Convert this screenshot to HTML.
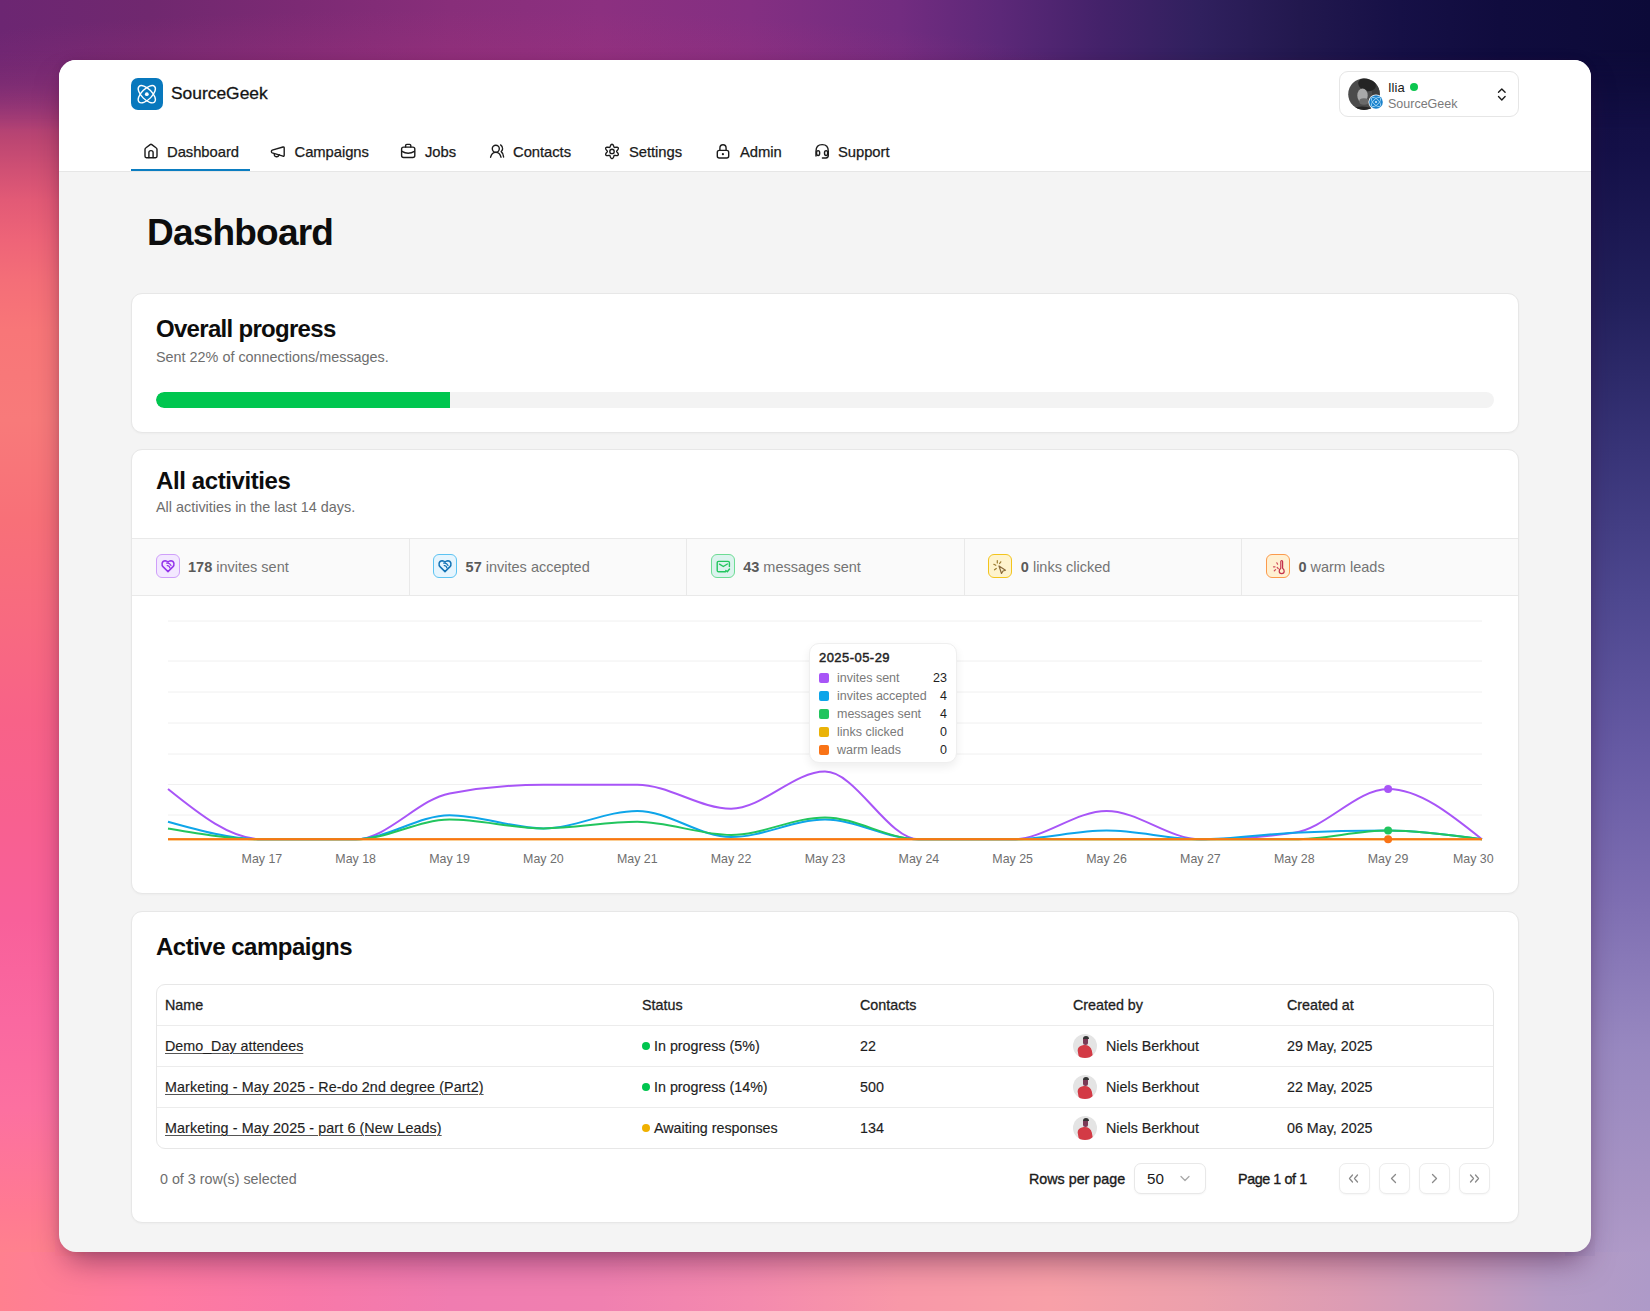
<!DOCTYPE html>
<html><head><meta charset="utf-8">
<style>
*{box-sizing:border-box;margin:0;padding:0}
html,body{width:1650px;height:1311px;overflow:hidden;font-family:"Liberation Sans",sans-serif;color:#111;background:#7a3a80}
.abs{position:absolute}
.t{position:absolute;white-space:nowrap;line-height:1}
#bg-top{left:0;top:0;width:1650px;height:140px;background:radial-gradient(ellipse 650px 70px at 450px 80px,rgba(165,50,125,.45),rgba(165,50,125,0)),linear-gradient(90deg,#6c2672 0,#70286f 150px,#7c2a74 300px,#882e7a 450px,#8c3080 600px,#842f82 750px,#722c80 900px,#5c2878 1000px,#44226a 1100px,#30205e 1200px,#22184e 1300px,#161046 1400px,#100c3e 1500px,#0c0a38 1650px)}
#bg-left{left:0;top:0;width:59px;height:1311px;background:linear-gradient(180deg,#6a2670 0,#722870 45px,#883274 80px,#a43c76 110px,#bc4672 140px,#d05074 170px,#e25a76 200px,#ee6478 240px,#f46e78 280px,#f87678 330px,#f87a7a 420px,#f87078 520px,#f86a80 620px,#f86288 720px,#f86090 820px,#f8609a 920px,#fa68a0 1020px,#fc70a0 1110px,#ff7a92 1210px,#ff8a88 1311px);-webkit-mask-image:linear-gradient(180deg,transparent 0,transparent 50px,#000 130px)}
#bg-right{left:1591px;top:0;width:59px;height:1311px;background:linear-gradient(180deg,#0e0b3a 0,#141048 150px,#22205c 300px,#383478 450px,#4e4890 600px,#665aa4 750px,#7e6eb2 900px,#9888c0 1050px,#a894c4 1200px,#b6a0cc 1311px);-webkit-mask-image:linear-gradient(180deg,transparent 0,transparent 50px,#000 130px)}
#bg-bot{left:0;top:1252px;width:1650px;height:59px;background:linear-gradient(90deg,#ff808f 0,#ff7aa0 150px,#f878a8 300px,#f07cb0 450px,#f080b0 600px,#f48aae 750px,#f898a8 900px,#f8a0a8 1050px,#eca0ac 1200px,#dc9cb4 1350px,#cc9cbc 1450px,#b69cc6 1550px,#ae9ac8 1650px)}
#win{left:59px;top:60px;width:1532px;height:1192px;border-radius:17px;background:#f4f4f4;overflow:hidden;box-shadow:0 16px 30px -8px rgba(60,10,50,.5),0 0 8px rgba(60,10,50,.12)}
#hdr{left:0;top:0;width:1532px;height:112px;background:#fff;border-bottom:1px solid #e6e6e6}
.card{position:absolute;left:131px;width:1388px;background:#fff;border:1px solid #e7e7e7;border-radius:11px;box-shadow:0 1px 2px rgba(0,0,0,.03)}
.nav{font-size:14.8px;letter-spacing:-0.05px;color:#1a1a1a;-webkit-text-stroke:0.25px #1a1a1a}
svg{position:absolute;overflow:visible}
.ttl{font-size:24px;font-weight:700;letter-spacing:-0.5px;color:#0d0d0d}
.sub{font-size:14.4px;color:#6e6e6e}
.stat{font-size:14.5px;color:#747474}
.stat b{color:#5a5a5a}
.ib{position:absolute;width:24px;height:24px;border-radius:6px;border:1.3px solid}
.xl{font-size:12.4px;color:#6f6f6f;top:852.5px}
.tt{font-size:12.5px;color:#7a7a7a}
.tv{font-size:12.5px;color:#1e1e1e;text-align:right;width:30px}
.sq{position:absolute;width:10px;height:10px;border-radius:2px}
.th{font-size:14.3px;color:#1e1e1e;-webkit-text-stroke:0.3px #1e1e1e}
.td{font-size:14.3px;color:#1e1e1e;-webkit-text-stroke:0.15px #1e1e1e}
.lnk{text-decoration:underline;text-decoration-color:#555;text-decoration-thickness:1.2px;text-underline-offset:1.5px}
.pb{position:absolute;top:1163px;width:31px;height:31px;border:1px solid #ececec;border-radius:7px;background:#fff;box-shadow:0 1px 2px rgba(0,0,0,.04)}
</style></head><body>
<div id="bg-top" class="abs"></div>
<div id="bg-left" class="abs"></div>
<div id="bg-right" class="abs"></div>
<div id="bg-bot" class="abs"></div>
<div class="abs" style="left:55px;top:1226px;width:30px;height:30px;background:#ff7c92"></div>
<div class="abs" style="left:1565px;top:1226px;width:30px;height:30px;background:#ac96c4"></div>
<div id="win" class="abs">
  <div id="hdr" class="abs"></div>
</div>
<!-- logo -->
<div class="abs" style="left:131px;top:78px;width:32px;height:32px;border-radius:7px;background:#0878bd"></div>
<div class="t" style="left:171px;top:85px;font-size:17.4px;color:#141414;-webkit-text-stroke:0.3px #141414">SourceGeek</div>
<!-- nav -->
<div class="abs" style="left:131px;top:169px;width:119px;height:2px;background:#0b7dc1"></div>
<div class="t nav" style="left:167px;top:144.9px">Dashboard</div>
<div class="t nav" style="left:294.5px;top:144.9px">Campaigns</div>
<div class="t nav" style="left:425px;top:144.9px">Jobs</div>
<div class="t nav" style="left:513px;top:144.9px">Contacts</div>
<div class="t nav" style="left:629px;top:144.9px">Settings</div>
<div class="t nav" style="left:740px;top:144.9px">Admin</div>
<div class="t nav" style="left:838px;top:144.9px">Support</div>
<!-- user box -->
<div class="abs" style="left:1339px;top:71px;width:180px;height:46px;border:1px solid #e6e6e6;border-radius:9px;background:#fff"></div>
<svg style="left:0;top:0" width="1650" height="200">
 <defs><clipPath id="avc"><circle cx="1364" cy="94.2" r="15.8"/></clipPath></defs>
 <g clip-path="url(#avc)">
  <rect x="1346" y="76" width="36" height="36" fill="#4c4c4c"/>
  <rect x="1372" y="76" width="12" height="36" fill="#3c3c3c"/>
  <ellipse cx="1367" cy="84.5" rx="9" ry="6.5" fill="#242424" transform="rotate(18 1367 84.5)"/>
  <ellipse cx="1362.5" cy="95.5" rx="5.2" ry="7" fill="#a9a9a9"/>
  <ellipse cx="1364" cy="101.5" rx="4.8" ry="3.2" fill="#6a6a6a"/>
  <ellipse cx="1362" cy="112" rx="13" ry="5.5" fill="#262626"/>
 </g>
 <circle cx="1376" cy="102" r="7.6" fill="#fff"/>
 <circle cx="1376" cy="102" r="6.8" fill="#1a82cc"/>
 <g fill="none" stroke="#9fd4f5" stroke-width="0.9">
  <ellipse cx="1376" cy="102" rx="6" ry="2.8" transform="rotate(45 1376 102)"/>
  <ellipse cx="1376" cy="102" rx="6" ry="2.8" transform="rotate(-45 1376 102)"/>
 </g>
 <circle cx="1376" cy="102" r="1" fill="#dff2ff"/>
</svg>
<div class="t" style="left:1388px;top:80.5px;font-size:13px;color:#1a1a1a">Ilia</div>
<div class="abs" style="left:1410px;top:82.5px;width:8px;height:8px;border-radius:50%;background:#0cc64f"></div>
<div class="t" style="left:1388px;top:98px;font-size:12.5px;color:#7a7a7a">SourceGeek</div>

<!-- title -->
<div class="t" style="left:147px;top:214px;font-size:37px;font-weight:700;letter-spacing:-0.8px;color:#0d0d0d">Dashboard</div>

<!-- card 1 -->
<div class="card" style="top:293px;height:140px"></div>
<div class="t ttl" style="left:156px;top:317px;letter-spacing:-0.7px">Overall progress</div>
<div class="t sub" style="left:156px;top:350px">Sent 22% of connections/messages.</div>
<div class="abs" style="left:156px;top:391.5px;width:1338px;height:16px;border-radius:8px;background:#f3f3f3;overflow:hidden"><div style="width:294px;height:16px;background:#00c64f;border-radius:8px 0 0 8px"></div></div>

<!-- card 2 -->
<div class="card" style="top:449px;height:445px;overflow:hidden">
  <div class="abs" style="left:0;top:88px;width:1388px;height:58px;background:#fafafa;border-top:1px solid #e9e9e9;border-bottom:1px solid #e9e9e9"></div>
  <div class="abs" style="left:276.6px;top:88px;width:1px;height:58px;background:#e9e9e9"></div>
  <div class="abs" style="left:554.2px;top:88px;width:1px;height:58px;background:#e9e9e9"></div>
  <div class="abs" style="left:831.8px;top:88px;width:1px;height:58px;background:#e9e9e9"></div>
  <div class="abs" style="left:1109.4px;top:88px;width:1px;height:58px;background:#e9e9e9"></div>
</div>
<div class="t ttl" style="left:156px;top:469px;letter-spacing:-0.4px">All activities</div>
<div class="t sub" style="left:156px;top:500px">All activities in the last 14 days.</div>

<!-- stat icons -->
<div class="ib" style="left:156px;top:554px;border-color:#cf9ffa;background:#f3e8ff"></div>
<div class="ib" style="left:433px;top:554px;border-color:#5cc3f2;background:#e6f5fe"></div>
<div class="ib" style="left:711px;top:554px;border-color:#6ddc94;background:#dcf3ee"></div>
<div class="ib" style="left:988px;top:554px;border-color:#f3c41c;background:#fef3cd"></div>
<div class="ib" style="left:1266px;top:554px;border-color:#fb9a4c;background:#fff0d2"></div>
<svg style="left:0;top:0" width="1650" height="1311">
 <g fill="none" stroke-width="1.4" stroke-linecap="round" stroke-linejoin="round">
  <path d="M168.0,571.6L163.2,566.9Q161.7,565.3 162.1,563.3Q162.7,560.9 165.2,560.8Q166.8,560.8 168.0,562.1Q169.2,560.8 170.8,560.8Q173.3,560.9 173.9,563.3Q174.3,565.3 172.8,566.9Z" stroke="#9333ea" stroke-width="1.5"/>
  <path d="M166.6,563.2Q169.6,562.4 171.0,565.6M167.2,565.6Q169.2,565.2 170.0,568" stroke="#9333ea" stroke-width="1.2"/>
  <path d="M445.0,571.6L440.2,566.9Q438.7,565.3 439.1,563.3Q439.7,560.9 442.2,560.8Q443.8,560.8 445.0,562.1Q446.2,560.8 447.8,560.8Q450.3,560.9 450.9,563.3Q451.3,565.3 449.8,566.9Z" stroke="#1272b4" stroke-width="1.5"/>
  <path d="M443.6,563.2Q446.6,562.4 448.0,565.6M444.2,565.6Q446.2,565.2 447.0,568" stroke="#1272b4" stroke-width="1.2"/>
  <path d="M725.5,571.8H718.6Q717.2,571.8 717.2,570.4V562.6Q717.2,561.4 718.5,561.4H728.1Q729.4,561.4 729.4,562.7V566.5" stroke="#22c55e"/>
  <path d="M719.5,564.2L723.3,566.5L727.4,564" stroke="#22c55e"/>
  <path d="M725.8,570.5L727.3,571.8L729.5,569" stroke="#22c55e"/>
  <path d="M999,566L1001.5,573.5L1003,571L1005.5,570.2Z" stroke="#8a6a3a" stroke-width="1.2"/>
  <path d="M997.3,560.5V563M993.8,564.3L995.8,565.3M994.5,569.8L996.3,568.5M1000.8,561.8L999.6,563.5" stroke="#9a7a30" stroke-width="1.2"/>
  <path d="M1282.6,561.5V568.2Q1284.2,569.4 1284.2,571.2Q1284.2,573.6 1281.7,573.6Q1279.2,573.6 1279.2,571.2Q1279.2,569.4 1280.8,568.2V561.5Q1280.8,560.5 1281.7,560.5Q1282.6,560.5 1282.6,561.5Z" stroke="#c4314b" stroke-width="1.2"/>
  <path d="M1276.8,562.8L1277.6,564.2M1273.5,566.8H1275M1274.3,570.8L1275.6,569.6M1278.3,568.7L1277.2,567.5" stroke="#d04a5a" stroke-width="1.2"/>
 </g>
</svg>
<div class="t stat" style="left:188px;top:560.2px"><b>178</b> invites sent</div>
<div class="t stat" style="left:465.6px;top:560.2px"><b>57</b> invites accepted</div>
<div class="t stat" style="left:743.2px;top:560.2px"><b>43</b> messages sent</div>
<div class="t stat" style="left:1020.8px;top:560.2px"><b>0</b> links clicked</div>
<div class="t stat" style="left:1298.4px;top:560.2px"><b>0</b> warm leads</div>


<!-- card 3 -->
<div class="card" style="top:911px;height:312px"></div>
<div class="t ttl" style="left:156px;top:935px">Active campaigns</div>

<div class="abs" style="left:156px;top:984px;width:1338px;height:165px;border:1px solid #e7e7e7;border-radius:9px"></div>
<div class="abs" style="left:157px;top:1024.5px;width:1336px;height:1px;background:#ececec"></div>
<div class="abs" style="left:157px;top:1065.5px;width:1336px;height:1px;background:#ececec"></div>
<div class="abs" style="left:157px;top:1106.5px;width:1336px;height:1px;background:#ececec"></div>
<div class="t th" style="left:165px;top:998px">Name</div>
<div class="t th" style="left:642px;top:998px">Status</div>
<div class="t th" style="left:860px;top:998px">Contacts</div>
<div class="t th" style="left:1073px;top:998px">Created by</div>
<div class="t th" style="left:1287px;top:998px">Created at</div>

<div class="t td lnk" style="left:165px;top:1039px">Demo_Day attendees</div>
<div class="t td lnk" style="left:165px;top:1080px;letter-spacing:0.1px">Marketing - May 2025 - Re-do 2nd degree (Part2)</div>
<div class="t td lnk" style="left:165px;top:1121px;letter-spacing:0.1px">Marketing - May 2025 - part 6 (New Leads)</div>

<div class="abs" style="left:642px;top:1041.5px;width:8px;height:8px;border-radius:50%;background:#00c54f"></div>
<div class="abs" style="left:642px;top:1082.5px;width:8px;height:8px;border-radius:50%;background:#00c54f"></div>
<div class="abs" style="left:642px;top:1123.5px;width:8px;height:8px;border-radius:50%;background:#f0b100"></div>
<div class="t td" style="left:654px;top:1039px">In progress (5%)</div>
<div class="t td" style="left:654px;top:1080px">In progress (14%)</div>
<div class="t td" style="left:654px;top:1121px">Awaiting responses</div>

<div class="t td" style="left:860px;top:1039px">22</div>
<div class="t td" style="left:860px;top:1080px">500</div>
<div class="t td" style="left:860px;top:1121px">134</div>

<div class="abs" style="left:1073px;top:1033.5px;width:24px;height:24px;border-radius:50%;background:#e4e4e4;overflow:hidden">
<div class="abs" style="left:5px;top:11px;width:14px;height:14px;border-radius:5px 7px 2px 2px;background:#d33a45;transform:rotate(-10deg)"></div>
<div class="abs" style="left:10px;top:3.5px;width:5px;height:8px;border-radius:3px;background:#7a3a55"></div>
<div class="abs" style="left:9.5px;top:2.5px;width:6px;height:3px;border-radius:3px 3px 0 0;background:#333"></div>
</div>
<div class="abs" style="left:1073px;top:1074.5px;width:24px;height:24px;border-radius:50%;background:#e4e4e4;overflow:hidden">
<div class="abs" style="left:5px;top:11px;width:14px;height:14px;border-radius:5px 7px 2px 2px;background:#d33a45;transform:rotate(-10deg)"></div>
<div class="abs" style="left:10px;top:3.5px;width:5px;height:8px;border-radius:3px;background:#7a3a55"></div>
<div class="abs" style="left:9.5px;top:2.5px;width:6px;height:3px;border-radius:3px 3px 0 0;background:#333"></div>
</div>
<div class="abs" style="left:1073px;top:1115.5px;width:24px;height:24px;border-radius:50%;background:#e4e4e4;overflow:hidden">
<div class="abs" style="left:5px;top:11px;width:14px;height:14px;border-radius:5px 7px 2px 2px;background:#d33a45;transform:rotate(-10deg)"></div>
<div class="abs" style="left:10px;top:3.5px;width:5px;height:8px;border-radius:3px;background:#7a3a55"></div>
<div class="abs" style="left:9.5px;top:2.5px;width:6px;height:3px;border-radius:3px 3px 0 0;background:#333"></div>
</div>

<div class="t td" style="left:1106px;top:1039px">Niels Berkhout</div>
<div class="t td" style="left:1106px;top:1080px">Niels Berkhout</div>
<div class="t td" style="left:1106px;top:1121px">Niels Berkhout</div>

<div class="t td" style="left:1287px;top:1039px">29 May, 2025</div>
<div class="t td" style="left:1287px;top:1080px">22 May, 2025</div>
<div class="t td" style="left:1287px;top:1121px">06 May, 2025</div>

<div class="t" style="left:160px;top:1172px;font-size:14.3px;color:#6e6e6e">0 of 3 row(s) selected</div>
<div class="t" style="left:1029px;top:1172px;font-size:14.3px;color:#1a1a1a;-webkit-text-stroke:0.35px #1a1a1a">Rows per page</div>
<div class="abs" style="left:1134px;top:1163px;width:72px;height:31px;border:1px solid #e8e8e8;border-radius:7px;background:#fff;box-shadow:0 1px 2px rgba(0,0,0,.04)"></div>
<div class="t" style="left:1147px;top:1171px;font-size:15.2px;color:#1a1a1a">50</div>
<div class="t" style="left:1238px;top:1172px;font-size:14.3px;color:#1a1a1a;-webkit-text-stroke:0.35px #1a1a1a;letter-spacing:-0.4px">Page 1 of 1</div>
<div class="pb" style="left:1338.5px"></div>
<div class="pb" style="left:1378.5px"></div>
<div class="pb" style="left:1418.5px"></div>
<div class="pb" style="left:1458.5px"></div>
<svg style="left:0;top:0" width="1650" height="1311">
 <g fill="none" stroke="#8a8a8a" stroke-width="1.3" stroke-linecap="round" stroke-linejoin="round">
  <path d="M1181,1176.5L1185,1180.5L1189,1176.5" stroke="#a8a8a8"/>
  <path d="M1352.5,1175L1349.5,1178.5L1352.5,1182M1357.5,1175L1354.5,1178.5L1357.5,1182"/>
  <path d="M1395.5,1174.5L1391.5,1178.5L1395.5,1182.5"/>
  <path d="M1432.5,1174.5L1436.5,1178.5L1432.5,1182.5"/>
  <path d="M1470.5,1175L1473.5,1178.5L1470.5,1182M1475.5,1175L1478.5,1178.5L1475.5,1182"/>
 </g>
</svg>


<div class="t xl" style="left:221.9px;width:80px;text-align:center">May 17</div>
<div class="t xl" style="left:315.7px;width:80px;text-align:center">May 18</div>
<div class="t xl" style="left:409.6px;width:80px;text-align:center">May 19</div>
<div class="t xl" style="left:503.4px;width:80px;text-align:center">May 20</div>
<div class="t xl" style="left:597.3px;width:80px;text-align:center">May 21</div>
<div class="t xl" style="left:691.1px;width:80px;text-align:center">May 22</div>
<div class="t xl" style="left:785.0px;width:80px;text-align:center">May 23</div>
<div class="t xl" style="left:878.9px;width:80px;text-align:center">May 24</div>
<div class="t xl" style="left:972.7px;width:80px;text-align:center">May 25</div>
<div class="t xl" style="left:1066.6px;width:80px;text-align:center">May 26</div>
<div class="t xl" style="left:1160.4px;width:80px;text-align:center">May 27</div>
<div class="t xl" style="left:1254.3px;width:80px;text-align:center">May 28</div>
<div class="t xl" style="left:1348.1px;width:80px;text-align:center">May 29</div>
<div class="t xl" style="left:1433.3px;width:80px;text-align:center">May 30</div>


<svg style="left:0;top:0" width="1650" height="1311" viewBox="0 0 1650 1311">
<g fill="none" stroke="#1c1c1c" stroke-width="1.4" stroke-linecap="round" stroke-linejoin="round">
 <path d="M145,156.3V149.6Q145,148.5 146,147.8L150.2,144.6Q151,144 151.8,144.6L156,147.8Q157,148.5 157,149.6V156.3Q157,157.7 155.6,157.7H146.4Q145,157.7 145,156.3Z"/>
 <path d="M148.9,157.5V152.6Q148.9,150.6 151,150.6Q153.1,150.6 153.1,152.6V157.5"/>
 <path d="M272.2,150.2L283,147Q284.2,146.7 284.2,147.9V155.3Q284.2,156.5 283,156.2L272.2,152.9Q271.4,152.6 271.4,151.6Q271.4,150.5 272.2,150.2Z"/>
 <path d="M274.3,153.6Q274,156.6 276.4,156.8Q278.5,157 279.2,154.6"/>
 <rect x="401.6" y="147.1" width="13.2" height="10.4" rx="2"/>
 <path d="M405.6,147V145.6Q405.6,144.4 406.8,144.4H409.6Q410.8,144.4 410.8,145.6V147"/>
 <path d="M402,151.3Q408.2,155.2 414.4,151.3"/>
 <circle cx="495.8" cy="148.8" r="3.5"/>
 <path d="M490.6,157.2Q491.8,152.4 495.8,152.4Q499.8,152.4 501,157.2"/>
 <path d="M500.6,144.9Q502.8,146.4 502.6,148.9Q502.4,150.6 501.2,151.6Q503.4,153.2 503.6,157"/>
 <path d="M612.00,144.25 L612.37,144.32 L612.72,144.53 L613.04,144.85 L613.31,145.25 L613.53,145.70 L613.70,146.16 L613.85,146.58 L613.99,146.93 L614.14,147.20 L614.33,147.37 L614.57,147.45 L614.87,147.44 L615.25,147.39 L615.69,147.30 L616.17,147.23 L616.67,147.19 L617.16,147.22 L617.59,147.34 L617.95,147.54 L618.19,147.83 L618.32,148.18 L618.31,148.59 L618.19,149.02 L617.98,149.46 L617.70,149.87 L617.39,150.25 L617.10,150.59 L616.86,150.89 L616.70,151.15 L616.65,151.40 L616.70,151.65 L616.86,151.91 L617.10,152.21 L617.39,152.55 L617.70,152.93 L617.98,153.34 L618.19,153.78 L618.31,154.21 L618.32,154.62 L618.19,154.97 L617.95,155.26 L617.59,155.46 L617.16,155.58 L616.67,155.61 L616.17,155.57 L615.69,155.50 L615.25,155.41 L614.87,155.36 L614.57,155.35 L614.33,155.43 L614.14,155.60 L613.99,155.87 L613.85,156.22 L613.70,156.64 L613.53,157.10 L613.31,157.55 L613.04,157.95 L612.72,158.27 L612.37,158.48 L612.00,158.55 L611.63,158.48 L611.28,158.27 L610.96,157.95 L610.69,157.55 L610.47,157.10 L610.30,156.64 L610.15,156.22 L610.01,155.87 L609.86,155.60 L609.67,155.43 L609.43,155.35 L609.13,155.36 L608.75,155.41 L608.31,155.50 L607.83,155.57 L607.33,155.61 L606.84,155.58 L606.41,155.46 L606.05,155.26 L605.81,154.98 L605.68,154.62 L605.69,154.21 L605.81,153.78 L606.02,153.34 L606.30,152.93 L606.61,152.55 L606.90,152.21 L607.14,151.91 L607.30,151.65 L607.35,151.40 L607.30,151.15 L607.14,150.89 L606.90,150.59 L606.61,150.25 L606.30,149.87 L606.02,149.46 L605.81,149.02 L605.69,148.59 L605.68,148.18 L605.81,147.83 L606.05,147.54 L606.41,147.34 L606.84,147.22 L607.33,147.19 L607.83,147.23 L608.31,147.30 L608.75,147.39 L609.13,147.44 L609.43,147.45 L609.67,147.37 L609.86,147.20 L610.01,146.93 L610.15,146.58 L610.30,146.16 L610.47,145.70 L610.69,145.25 L610.96,144.85 L611.28,144.53 L611.63,144.32 L612.00,144.25Z"/>
 <circle cx="612" cy="151.4" r="2.2"/>
 <rect x="717.3" y="150.4" width="11.4" height="7.6" rx="2"/>
 <path d="M719.9,150.3V148.2Q719.9,144.7 723,144.7Q726.1,144.7 726.1,148.2V150.3"/>
 <path d="M816,156V151.2Q816,144.6 822.2,144.6Q828.3,144.6 828.3,151.2V155.6Q828.3,158 825.9,158H822.4"/>
 <ellipse cx="818.1" cy="153.1" rx="1.6" ry="2.5"/>
 <ellipse cx="826.1" cy="153.1" rx="1.6" ry="2.5"/>
</g>
<circle cx="722.9" cy="154.2" r="1.1" fill="#1c1c1c"/>
<!-- logo atom -->
<g fill="none" stroke="#fff" stroke-width="1.4">
 <ellipse cx="146.8" cy="94.2" rx="11" ry="5.2" transform="rotate(45 146.8 94.2)"/>
 <ellipse cx="146.8" cy="94.2" rx="11" ry="5.2" transform="rotate(-45 146.8 94.2)"/>
</g>
<circle cx="146.8" cy="94.2" r="1.9" fill="#fff"/>
<!-- user chevrons -->
<path d="M1498.5,92.3L1501.8,89L1505.1,92.3M1498.5,96.6L1501.8,99.9L1505.1,96.6" fill="none" stroke="#1c1c1c" stroke-width="1.4" stroke-linecap="round" stroke-linejoin="round"/>
<!-- chart -->
<line x1="168" x2="1482" y1="621" y2="621" stroke="#f0f0f0" stroke-width="1"/>
<line x1="168" x2="1482" y1="661" y2="661" stroke="#f0f0f0" stroke-width="1"/>
<line x1="168" x2="1482" y1="692" y2="692" stroke="#f0f0f0" stroke-width="1"/>
<line x1="168" x2="1482" y1="723" y2="723" stroke="#f0f0f0" stroke-width="1"/>
<line x1="168" x2="1482" y1="754" y2="754" stroke="#f0f0f0" stroke-width="1"/>
<line x1="168" x2="1482" y1="784.5" y2="784.5" stroke="#f0f0f0" stroke-width="1"/>
<line x1="168" x2="1482" y1="815" y2="815" stroke="#f0f0f0" stroke-width="1"/>

<path d="M168.0,789.0C199.3,814.2,230.6,839.3,261.9,839.3C293.1,839.3,324.4,839.3,355.7,839.3C387.0,839.3,418.3,799.2,449.6,793.4C480.9,787.6,512.1,784.7,543.4,784.7C574.7,784.7,606.0,784.7,637.3,784.7C668.6,784.7,699.9,808.7,731.1,808.7C762.4,808.7,793.7,771.6,825.0,771.6C856.3,771.6,887.6,839.3,918.9,839.3C950.1,839.3,981.4,839.3,1012.7,839.3C1044.0,839.3,1075.3,810.9,1106.6,810.9C1137.9,810.9,1169.1,839.3,1200.4,839.3C1231.7,839.3,1263.0,837.1,1294.3,832.7C1325.6,828.4,1356.9,789.0,1388.1,789.0C1419.4,789.0,1450.7,814.2,1482.0,839.3" fill="none" stroke="#a855f7" stroke-width="2"/>
<path d="M168.0,821.8C199.3,830.6,230.6,839.3,261.9,839.3C293.1,839.3,324.4,839.3,355.7,839.3C387.0,839.3,418.3,815.3,449.6,815.3C480.9,815.3,512.1,828.4,543.4,828.4C574.7,828.4,606.0,810.9,637.3,810.9C668.6,810.9,699.9,837.1,731.1,837.1C762.4,837.1,793.7,819.6,825.0,819.6C856.3,819.6,887.6,839.3,918.9,839.3C950.1,839.3,981.4,839.3,1012.7,839.3C1044.0,839.3,1075.3,830.6,1106.6,830.6C1137.9,830.6,1169.1,839.3,1200.4,839.3C1231.7,839.3,1263.0,834.2,1294.3,832.7C1325.6,831.3,1356.9,830.6,1388.1,830.6C1419.4,830.6,1450.7,834.9,1482.0,839.3" fill="none" stroke="#0ea5e9" stroke-width="2"/>
<path d="M168.0,828.4C199.3,833.8,230.6,839.3,261.9,839.3C293.1,839.3,324.4,839.3,355.7,839.3C387.0,839.3,418.3,819.6,449.6,819.6C480.9,819.6,512.1,828.4,543.4,828.4C574.7,828.4,606.0,821.8,637.3,821.8C668.6,821.8,699.9,834.9,731.1,834.9C762.4,834.9,793.7,817.4,825.0,817.4C856.3,817.4,887.6,839.3,918.9,839.3C950.1,839.3,981.4,839.3,1012.7,839.3C1044.0,839.3,1075.3,839.3,1106.6,839.3C1137.9,839.3,1169.1,839.3,1200.4,839.3C1231.7,839.3,1263.0,839.3,1294.3,839.3C1325.6,839.3,1356.9,830.6,1388.1,830.6C1419.4,830.6,1450.7,834.9,1482.0,839.3" fill="none" stroke="#22c55e" stroke-width="2"/>
<path d="M168.0,839.3C199.3,839.3,230.6,839.3,261.9,839.3C293.1,839.3,324.4,839.3,355.7,839.3C387.0,839.3,418.3,839.3,449.6,839.3C480.9,839.3,512.1,839.3,543.4,839.3C574.7,839.3,606.0,839.3,637.3,839.3C668.6,839.3,699.9,839.3,731.1,839.3C762.4,839.3,793.7,839.3,825.0,839.3C856.3,839.3,887.6,839.3,918.9,839.3C950.1,839.3,981.4,839.3,1012.7,839.3C1044.0,839.3,1075.3,839.3,1106.6,839.3C1137.9,839.3,1169.1,839.3,1200.4,839.3C1231.7,839.3,1263.0,839.3,1294.3,839.3C1325.6,839.3,1356.9,839.3,1388.1,839.3C1419.4,839.3,1450.7,839.3,1482.0,839.3" fill="none" stroke="#eab308" stroke-width="2"/>
<path d="M168.0,839.3C199.3,839.3,230.6,839.3,261.9,839.3C293.1,839.3,324.4,839.3,355.7,839.3C387.0,839.3,418.3,839.3,449.6,839.3C480.9,839.3,512.1,839.3,543.4,839.3C574.7,839.3,606.0,839.3,637.3,839.3C668.6,839.3,699.9,839.3,731.1,839.3C762.4,839.3,793.7,839.3,825.0,839.3C856.3,839.3,887.6,839.3,918.9,839.3C950.1,839.3,981.4,839.3,1012.7,839.3C1044.0,839.3,1075.3,839.3,1106.6,839.3C1137.9,839.3,1169.1,839.3,1200.4,839.3C1231.7,839.3,1263.0,839.3,1294.3,839.3C1325.6,839.3,1356.9,839.3,1388.1,839.3C1419.4,839.3,1450.7,839.3,1482.0,839.3" fill="none" stroke="#f97316" stroke-width="2"/>

<circle cx="1388.1" cy="789.0" r="4" fill="#a855f7"/><circle cx="1388.1" cy="830.6" r="4" fill="#22c55e"/><circle cx="1388.1" cy="839.3" r="4" fill="#f97316"/>
</svg>


<div class="abs" style="left:808.5px;top:642.5px;width:148.5px;height:120px;background:#fff;border:1px solid #efefef;border-radius:10px;box-shadow:0 4px 10px rgba(0,0,0,.07)"></div>
<div class="t" style="left:819px;top:651px;font-size:13px;font-weight:400;color:#222;-webkit-text-stroke:0.45px #222;letter-spacing:0.45px">2025-05-29</div>
<div class="sq" style="left:819px;top:672.5px;background:#a855f7"></div>
<div class="sq" style="left:819px;top:690.5px;background:#0ea5e9"></div>
<div class="sq" style="left:819px;top:708.5px;background:#22c55e"></div>
<div class="sq" style="left:819px;top:726.5px;background:#eab308"></div>
<div class="sq" style="left:819px;top:744.5px;background:#f97316"></div>
<div class="t tt" style="left:837px;top:671.5px">invites sent</div>
<div class="t tt" style="left:837px;top:689.5px">invites accepted</div>
<div class="t tt" style="left:837px;top:707.5px">messages sent</div>
<div class="t tt" style="left:837px;top:725.5px">links clicked</div>
<div class="t tt" style="left:837px;top:743.5px">warm leads</div>
<div class="t tv" style="left:917px;top:671.5px">23</div>
<div class="t tv" style="left:917px;top:689.5px">4</div>
<div class="t tv" style="left:917px;top:707.5px">4</div>
<div class="t tv" style="left:917px;top:725.5px">0</div>
<div class="t tv" style="left:917px;top:743.5px">0</div>

</body></html>
